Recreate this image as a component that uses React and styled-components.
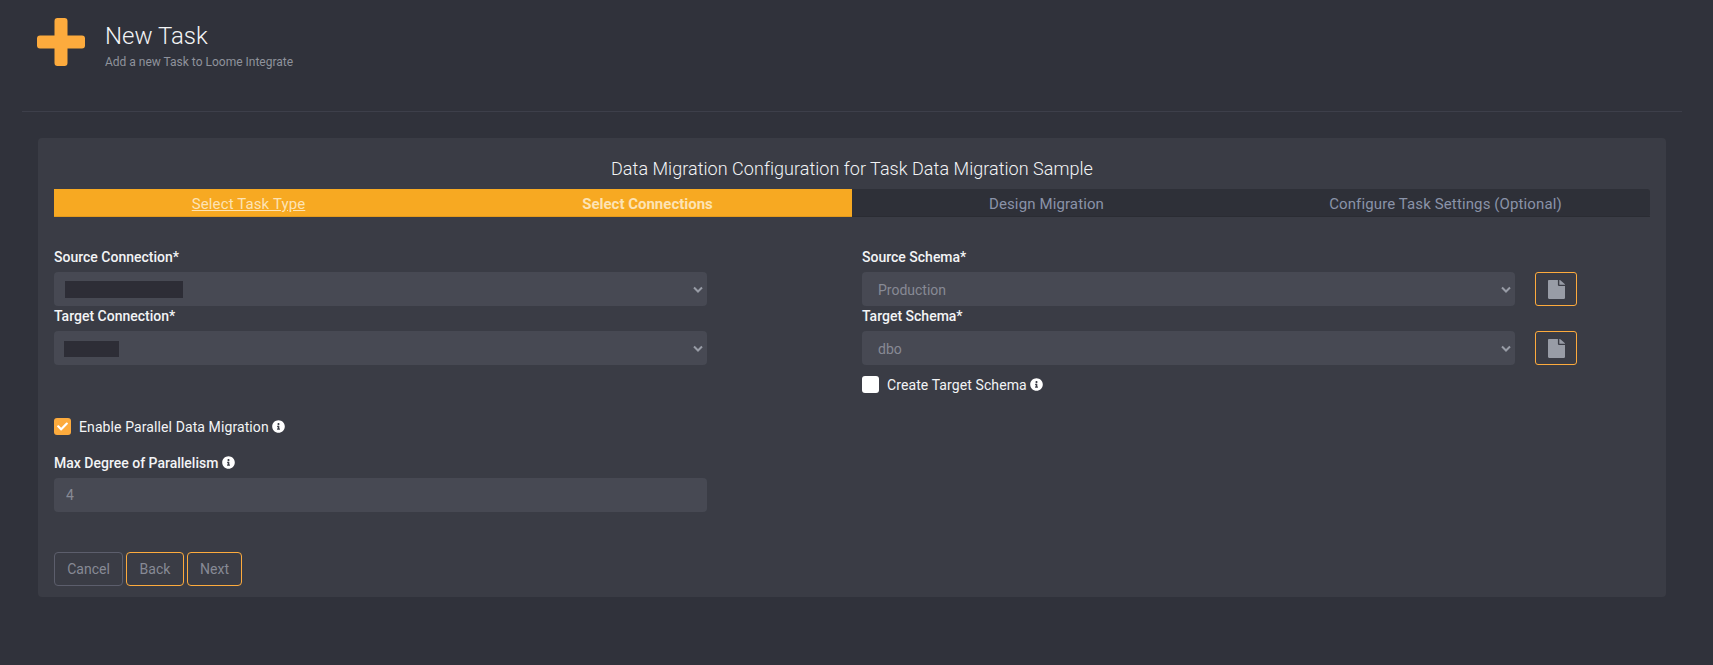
import React from "react";
import styled, { createGlobalStyle } from "styled-components";
import { FaCheck, FaFile, FaInfoCircle } from "react-icons/fa";

const STEPS = [
  { label: "Select Task Type", state: "done" },
  { label: "Select Connections", state: "active" },
  { label: "Design Migration", state: "todo" },
  { label: "Configure Task Settings (Optional)", state: "todo" },
];

const App = () => {
  return (
    <Page>
      <GlobalStyle />
      <Header>
        <PlusIcon viewBox="0 0 48 48">
          <path d="M17.5 3a3 3 0 0 1 3-3h7a3 3 0 0 1 3 3v14.5H45a3 3 0 0 1 3 3v7a3 3 0 0 1-3 3H30.5V45a3 3 0 0 1-3 3h-7a3 3 0 0 1-3-3V30.5H3a3 3 0 0 1-3-3v-7a3 3 0 0 1 3-3h14.5z" />
        </PlusIcon>
        <div>
          <PageTitle>New Task</PageTitle>
          <PageSubtitle>Add a new Task to Loome Integrate</PageSubtitle>
        </div>
      </Header>
      <Divider />
      <Card>
        <CardTitle>Data Migration Configuration for Task Data Migration Sample</CardTitle>
        <Steps>
          {STEPS.map((step) => (
            <Step key={step.label} $state={step.state}>
              {step.label}
            </Step>
          ))}
        </Steps>
        <FormGrid>
          <Column>
            <FieldRow>
              <Field>
                <Label>Source Connection*</Label>
                <SelectBox redact={{ width: 118, left: 11, top: 9, height: 17 }} />
              </Field>
            </FieldRow>
            <FieldRow>
              <Field>
                <Label>Target Connection*</Label>
                <SelectBox redact={{ width: 55, left: 10, top: 10, height: 16 }} />
              </Field>
            </FieldRow>
          </Column>
          <Column>
            <FieldRow>
              <Field>
                <Label>Source Schema*</Label>
                <SelectBox value="Production" />
              </Field>
              <IconButton aria-label="View source schema">
                <FileIcon preserveAspectRatio="none" />
              </IconButton>
            </FieldRow>
            <FieldRow>
              <Field>
                <Label>Target Schema*</Label>
                <SelectBox value="dbo" />
              </Field>
              <IconButton aria-label="View target schema">
                <FileIcon preserveAspectRatio="none" />
              </IconButton>
            </FieldRow>
            <CreateSchemaRow>
              <Check />
              <CheckLabel>
                Create Target Schema <InfoIcon />
              </CheckLabel>
            </CreateSchemaRow>
          </Column>
        </FormGrid>
        <ParallelRow>
          <Check $checked>
            <FaCheck />
          </Check>
          <CheckLabel>
            Enable Parallel Data Migration <InfoIcon />
          </CheckLabel>
        </ParallelRow>
        <Label>
          Max Degree of Parallelism <InfoIcon />
        </Label>
        <NumberInput defaultValue="4" />
        <Actions>
          <ActionButton $width={69}>Cancel</ActionButton>
          <ActionButton $width={58} $primary>
            Back
          </ActionButton>
          <ActionButton $width={55} $primary>
            Next
          </ActionButton>
        </Actions>
      </Card>
    </Page>
  );
};

const SelectBox = ({ value, redact }) => (
  <SelectWrap>
    <Select defaultValue={value || ""}>
      <option value={value || ""}>{value || ""}</option>
    </Select>
    {redact && <Redaction style={redact} />}
    <Chevron viewBox="0 0 10 7">
      <path d="M1 1.5l4 4 4-4" />
    </Chevron>
  </SelectWrap>
);

export default App;

const GlobalStyle = createGlobalStyle`
  html, body {
    margin: 0;
    background: #30323b;
  }
  * {
    box-sizing: border-box;
  }
`;

const Page = styled.div`
  height: 665px;
  overflow: hidden;
  padding: 0 31px 0 22px;
  font-family: Roboto, "Liberation Sans", sans-serif;
  background: #30323b;
  color: #fff;
`;

const Header = styled.div`
  display: flex;
  align-items: flex-start;
  gap: 20px;
  height: 111px;
  padding: 18px 0 0 15px;
`;

const PlusIcon = styled.svg`
  flex: none;
  width: 48px;
  height: 48px;
  fill: #fdab3d;
`;

const PageTitle = styled.div`
  font-size: 24px;
  font-weight: 300;
  line-height: 29px;
  margin-top: 4px;
  color: #f3f4f6;
`;

const PageSubtitle = styled.div`
  font-size: 12px;
  line-height: 16px;
  margin-top: 3px;
  color: #8f929c;
`;

const Divider = styled.div`
  height: 1px;
  background: #3d3f4a;
`;

const Card = styled.div`
  margin: 26px 16px 0;
  height: 459px;
  padding: 19px 16px 0;
  background: #3a3c45;
  border-radius: 4px;
`;

const CardTitle = styled.div`
  height: 32px;
  padding-top: 1px;
  text-align: center;
  font-size: 18px;
  font-weight: 300;
  line-height: 21px;
  letter-spacing: 0.04px;
  color: #f3f4f6;
`;

const Steps = styled.div`
  display: grid;
  grid-template-columns: repeat(4, 1fr);
  height: 28px;
  background: #2e3038;
  border-radius: 0 3px 3px 0;
`;

const Step = styled.div`
  height: 28px;
  padding-right: 10px;
  text-align: center;
  font-size: 15px;
  line-height: 30px;
  letter-spacing: ${({ $state }) => ($state === "active" ? 0 : "0.12px")};
  font-weight: ${({ $state }) => ($state === "active" ? 700 : 400)};
  text-decoration: ${({ $state }) => ($state === "done" ? "underline" : "none")};
  color: ${({ $state }) => ($state === "todo" ? "#8a93a8" : "#fde3b4")};
  background: ${({ $state }) => ($state === "todo" ? "transparent" : "#f7a922")};
  border-bottom: 1px solid ${({ $state }) => ($state === "todo" ? "#2a2c33" : "#e39a1c")};
`;

const FormGrid = styled.div`
  display: grid;
  grid-template-columns: 653px 1fr;
  column-gap: 155px;
  margin-top: 30px;
`;

const Column = styled.div`
  display: flex;
  flex-direction: column;
`;

const FieldRow = styled.div`
  display: flex;
  align-items: flex-end;
  gap: 20px;
  height: 59px;
`;

const Field = styled.div`
  flex: 0 0 653px;
`;

const Label = styled.div`
  display: flex;
  align-items: center;
  gap: 4px;
  height: 19px;
  margin-bottom: 6px;
  font-size: 14px;
  font-weight: 500;
  color: #f3f4f6;
`;

const SelectWrap = styled.div`
  position: relative;
`;

const Select = styled.select`
  display: block;
  width: 100%;
  height: 34px;
  padding: 2px 16px 0;
  border: none;
  border-radius: 4px;
  appearance: none;
  font-family: inherit;
  font-size: 14px;
  color: #878a95;
  background: #474953;
`;

const Redaction = styled.span`
  position: absolute;
  background: #2d2d36;
`;

const Chevron = styled.svg`
  position: absolute;
  top: 14px;
  right: 4px;
  width: 10px;
  height: 7px;
  fill: none;
  stroke: #989ca6;
  stroke-width: 2;
`;

const IconButton = styled.button`
  display: flex;
  align-items: center;
  justify-content: center;
  flex: none;
  width: 42px;
  height: 34px;
  padding: 0;
  color: #989ca6;
  background: transparent;
  border: 1px solid #fdab3d;
  border-radius: 3px;
`;

const FileIcon = styled(FaFile)`
  width: 17px;
  height: 19px;
`;

const CreateSchemaRow = styled.div`
  display: flex;
  align-items: center;
  gap: 8px;
  margin-top: 11px;
`;

const Check = styled.span`
  display: flex;
  align-items: center;
  justify-content: center;
  flex: none;
  width: 17px;
  height: 17px;
  font-size: 11px;
  border-radius: 3px;
  color: #fff;
  background: ${({ $checked }) => ($checked ? "#fdab3d" : "#fff")};
`;

const CheckLabel = styled.div`
  display: flex;
  align-items: center;
  gap: 3px;
  font-size: 14px;
  letter-spacing: 0.1px;
  color: #f3f4f6;
`;

const InfoIcon = styled(FaInfoCircle)`
  font-size: 13px;
  color: #fff;
`;

const ParallelRow = styled.div`
  display: flex;
  align-items: center;
  gap: 8px;
  margin-top: 25px;
  margin-bottom: 18px;
`;

const NumberInput = styled.input`
  display: block;
  width: 653px;
  height: 34px;
  padding: 0 12px;
  border: none;
  border-radius: 4px;
  font-family: inherit;
  font-size: 14px;
  color: #878a95;
  background: #474953;
`;

const Actions = styled.div`
  display: flex;
  gap: 3px;
  margin-top: 40px;
`;

const ActionButton = styled.button`
  width: ${({ $width }) => $width}px;
  height: 34px;
  padding: 0;
  font-family: inherit;
  font-size: 14px;
  color: #878a95;
  background: transparent;
  border: 1px solid ${({ $primary }) => ($primary ? "#fdab3d" : "#5c5e6c")};
  border-radius: 4px;
`;
